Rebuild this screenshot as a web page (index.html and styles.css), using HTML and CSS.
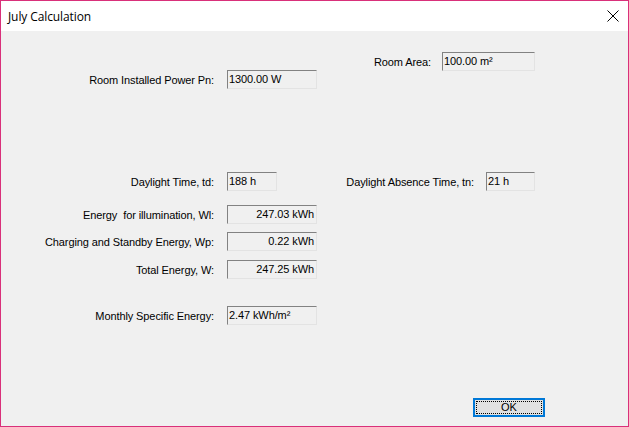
FILE: index.html
```html
<!DOCTYPE html>
<html>
<head>
<meta charset="utf-8">
<link rel="stylesheet" href="styles.css">
</head>
<body>
<div class="window">
  <div class="titlebar">
    <span class="title">July Calculation</span>
    <svg class="close" width="12" height="12" viewBox="0 0 12 12"><path d="M0.5 0.5 L11.5 11.5 M11.5 0.5 L0.5 11.5" stroke="#000" stroke-width="1" fill="none"/></svg>
  </div>
  <div class="body">
    <div class="row row-area">
      <span class="label">Room Area:</span>
      <span class="field w93">100.00 m²</span>
    </div>
    <div class="row row-power">
      <span class="label main">Room Installed Power Pn:</span>
      <span class="field w90">1300.00 W</span>
    </div>
    <div class="row row-time">
      <span class="label main">Daylight Time, td:</span>
      <span class="field w50">188 h</span>
      <span class="label second">Daylight Absence Time, tn:</span>
      <span class="field w49">21 h</span>
    </div>
    <div class="row row-e1">
      <span class="label main">Energy&nbsp; for illumination, Wl:</span>
      <span class="field w90 num">247.03 kWh</span>
    </div>
    <div class="row row-e2">
      <span class="label main">Charging and Standby Energy, Wp:</span>
      <span class="field w90 num">0.22 kWh</span>
    </div>
    <div class="row row-e3">
      <span class="label main">Total Energy, W:</span>
      <span class="field w90 num">247.25 kWh</span>
    </div>
    <div class="row row-month">
      <span class="label main">Monthly Specific Energy:</span>
      <span class="field w90">2.47 kWh/m²</span>
    </div>
    <div class="footer">
      <button class="ok"><span class="focus">OK</span></button>
    </div>
  </div>
</div>
</body>
</html>
```
FILE: styles.css
```css
html, body {
  margin: 0;
  padding: 0;
}
body {
  width: 629px;
  height: 427px;
  overflow: hidden;
  font-family: "Liberation Sans", Arial, sans-serif;
  font-size: 11px;
  letter-spacing: -0.1px;
  color: #000;
}
.window {
  box-sizing: border-box;
  width: 629px;
  height: 427px;
  border: 1px solid #d9307a;
  display: flex;
  flex-direction: column;
  background: #f0f0f0;
}
.titlebar {
  height: 30px;
  flex: none;
  background: #fff;
  display: flex;
  align-items: center;
  justify-content: space-between;
  padding: 0 9px 0 7px;
}
.title {
  font-family: "Open Sans", "Noto Sans", sans-serif;
  font-size: 12px;
  letter-spacing: -0.1px;
}
.body {
  flex: 1;
  display: flex;
  flex-direction: column;
}
.row {
  display: flex;
  align-items: center;
  height: 19px;
}
.label {
  white-space: nowrap;
}
.main {
  width: 213px;
  text-align: right;
  margin-right: 13px;
}
.second {
  width: 197px;
  text-align: right;
  margin-right: 12px;
}
.row-area {
  margin-top: 21px;
  justify-content: flex-end;
  padding-right: 93px;
}
.row-area .label {
  margin-right: 11px;
}
.row-power {
  margin-top: -1px;
}
.row-time {
  margin-top: 83px;
}
.row-e1 {
  margin-top: 14px;
}
.row-e2 {
  margin-top: 8px;
}
.row-e3 {
  margin-top: 9px;
}
.row-month {
  margin-top: 27px;
}
.field {
  box-sizing: border-box;
  height: 19px;
  line-height: 17px;
  padding: 0 2px 0 1px;
  border: 1px solid;
  border-color: #828282 #e3e3e3 #e3e3e3 #828282;
  background: #f0f0f0;
  white-space: nowrap;
}
.num {
  text-align: right;
}
.w93 { width: 93px; }
.w90 { width: 90px; }
.w50 { width: 50px; }
.w49 { width: 49px; }
.footer {
  margin-top: auto;
  margin-bottom: 9px;
  display: flex;
  justify-content: flex-end;
  padding-right: 83px;
}
.ok {
  box-sizing: border-box;
  width: 72px;
  height: 19px;
  padding: 1px;
  border: 2px solid #0078d7;
  background: #e1e1e1;
  font-family: "Liberation Sans", Arial, sans-serif;
  font-size: 11px;
  color: #000;
  display: flex;
}
.focus {
  flex: 1;
  border: 1px dotted #000;
  line-height: 11px;
  text-align: center;
}
```
